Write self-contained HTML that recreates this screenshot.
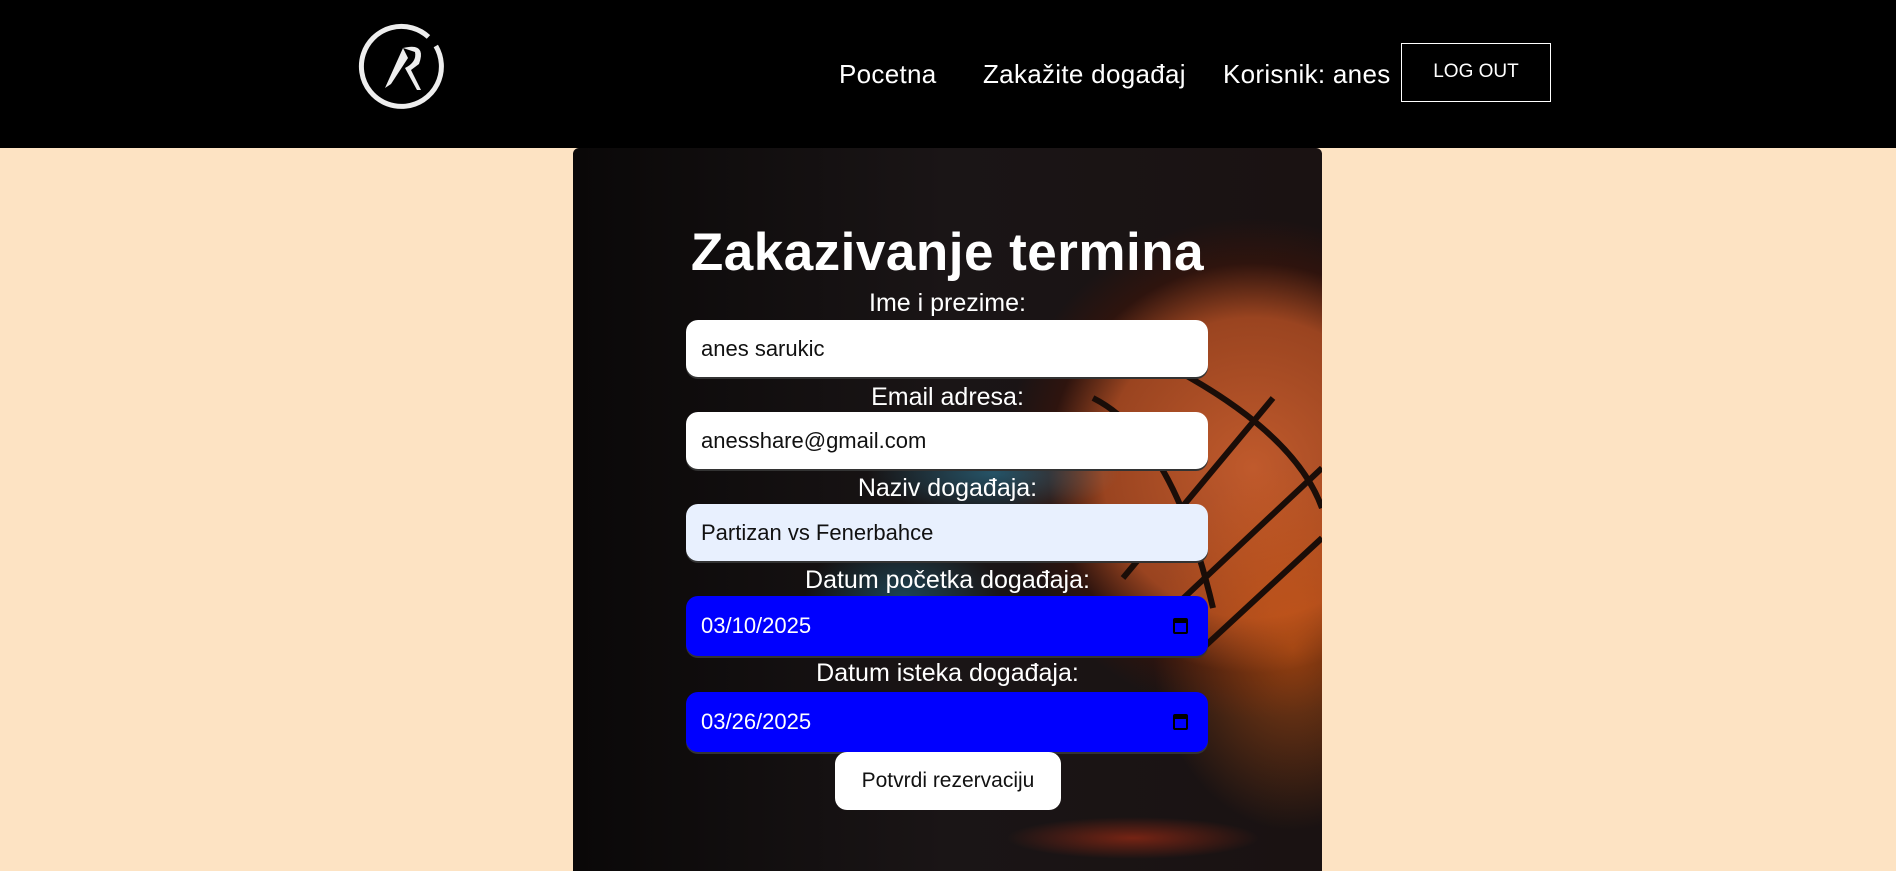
<!DOCTYPE html>
<html><head><meta charset="utf-8"><style>
*{margin:0;padding:0;box-sizing:border-box}
html,body{width:1896px;height:871px;overflow:hidden;background:#fde3c3;font-family:"Liberation Sans",sans-serif}
.hdr{position:absolute;left:0;top:0;width:1896px;height:148px;background:#000}
.nav{position:absolute;top:59px;color:#fff;font-size:26px;letter-spacing:.3px;white-space:nowrap}
.lo{position:absolute;left:1401px;top:43px;width:150px;height:59px;border:1.5px solid #fff;color:#fff;font-size:19px;text-align:center;line-height:56px}
.card{position:absolute;left:573px;top:148px;width:749px;height:723px;border-radius:6px 6px 0 0;overflow:hidden;
background:
radial-gradient(ellipse 180px 60px at 420px 325px,rgba(60,200,255,.35),transparent 70%),
radial-gradient(ellipse 140px 90px at 330px 450px,rgba(40,180,230,.3),transparent 70%),
radial-gradient(ellipse 200px 260px at 720px 500px,rgba(230,100,20,.55),transparent 70%),
radial-gradient(circle 250px at 680px 320px,#c05a2c 0,#9a4420 60%,rgba(60,20,10,.6) 82%,transparent 100%),
radial-gradient(ellipse 180px 30px at 560px 690px,rgba(255,60,20,.4),transparent 70%),
linear-gradient(90deg,#0a0808,#1a1516 50%,#1a1212);}
.t{position:absolute;left:0;width:749px;text-align:center;color:#fff;height:28px;line-height:28px}
h1{position:absolute;left:0;top:74px;width:749px;text-align:center;color:#fff;font-size:53px;letter-spacing:.5px;font-weight:bold;line-height:62px}
.lbl{font-size:25px}
.in{position:absolute;left:113px;width:522px;height:57px;border-radius:12px;background:#fff;font-size:22px;padding-left:15px;line-height:57px;color:#111;box-shadow:0 2px 0 #333}
.d{background:#0000ff;color:#fff;height:60px;line-height:60px}
.cal{position:absolute;right:20px;top:22px;width:15px;height:16px;border:2px solid #000;border-top-width:5px;border-radius:2px}
.btn{position:absolute;left:262px;top:604px;width:226px;height:58px;background:#fff;border-radius:12px;font-size:21px;text-align:center;line-height:58px;color:#111}
</style></head><body>
<div class="hdr">
<svg style="position:absolute;left:355px;top:18px" width="96" height="96" viewBox="0 0 96 96">
<path d="M72 18 A40 40 0 1 1 62 12" fill="none" stroke="#eee" stroke-width="5" transform="rotate(20 48 48)"/>
<path d="M30 70 L48 30 L53 40 L36 66 Z" fill="#eee"/>
<path d="M48 30 Q72 24 64 46 L56 52 L66 72 L62 72 L50 50 Q62 44 60 34 Z" fill="#eee"/>
</svg>
<div class="nav" style="left:839px">Pocetna</div>
<div class="nav" style="left:983px">Zakažite događaj</div>
<div class="nav" style="left:1223px">Korisnik: anes</div>
<div class="lo">LOG OUT</div>
</div>
<div class="card">
<svg style="position:absolute;left:400px;top:130px" width="349" height="450" viewBox="0 0 349 450">
<g fill="none" stroke="#1a0d08" stroke-width="6">
<path d="M120 120 Q200 160 240 330"/><path d="M180 80 Q320 150 349 230"/>
<path d="M200 330 L349 190"/><path d="M230 370 L349 260"/><path d="M150 300 L300 120"/>
</g></svg>
<h1>Zakazivanje termina</h1>
<div class="t lbl" style="top:141px">Ime i prezime:</div>
<div class="in" style="top:172px">anes sarukic</div>
<div class="t lbl" style="top:235px">Email adresa:</div>
<div class="in" style="top:264px">anesshare@gmail.com</div>
<div class="t lbl" style="top:326px">Naziv događaja:</div>
<div class="in" style="top:356px;background:#e8f0fe">Partizan vs Fenerbahce</div>
<div class="t lbl" style="top:418px">Datum početka događaja:</div>
<div class="in d" style="top:448px">03/10/2025<span class="cal"></span></div>
<div class="t lbl" style="top:511px">Datum isteka događaja:</div>
<div class="in d" style="top:544px">03/26/2025<span class="cal"></span></div>
<div class="btn">Potvrdi rezervaciju</div>
</div>
</body></html>
